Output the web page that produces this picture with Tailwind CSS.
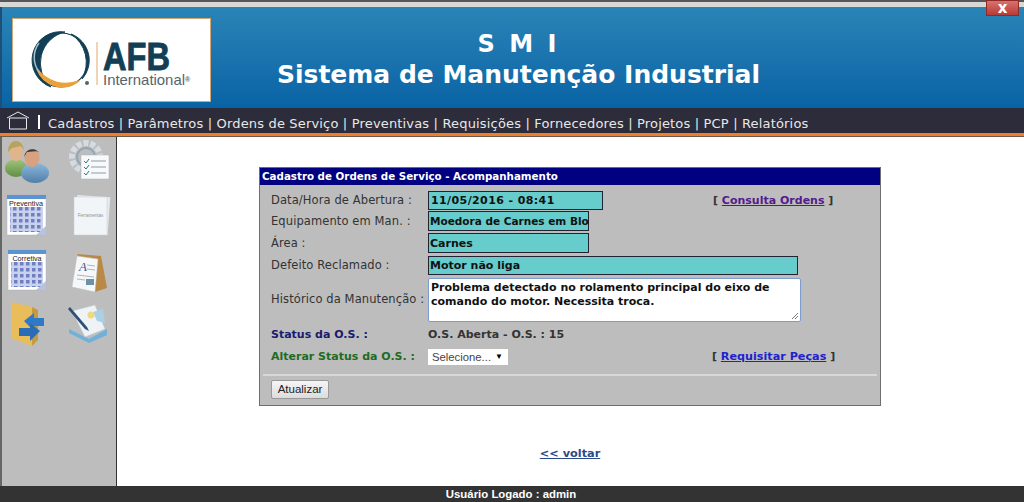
<!DOCTYPE html>
<html lang="pt-BR">
<head>
  <meta charset="UTF-8" />
  <title>SMI - Sistema de Manutenção Industrial</title>
  <script src="https://cdn.jsdelivr.net/npm/@tailwindcss/browser@4"></script>
</head>
<body class="w-[1024px] h-[502px] overflow-hidden bg-white font-['DejaVu_Sans',sans-serif] flex flex-col">

  <!-- window title strip -->
  <div class="h-[7px] shrink-0 bg-[#d8d8d4] border-t-2 border-[#55555a] flex justify-end relative">
    <div class="absolute right-[5px] top-[-2px] w-[33px] h-[16px] bg-gradient-to-b from-[#d9706c] to-[#b83a36] border border-[#8e2a28] text-white text-[15px] leading-[14px] font-bold text-center">x</div>
  </div>

  <!-- header -->
  <header class="h-[101px] shrink-0 bg-gradient-to-b from-[#2a84b6] to-[#0863a5] border-l-2 border-[#1d4f78] flex pl-[10px] pt-[11px]">
    <div class="w-[199px] h-[84px] bg-white border border-[#d0a878] shrink-0">
      <svg width="197" height="82" viewBox="0 0 197 82">
        <circle cx="48" cy="41" r="27" fill="none" stroke="#123f55" stroke-width="1.2"/>
        <path d="M 52 13 A 28.5 28.5 0 0 0 38 68 A 32 32 0 0 1 52 13 Z" fill="#123f55" stroke="#123f55" stroke-width="1"/>
        <path d="M 58 15 A 28 28 0 0 1 69 60 A 34 34 0 0 0 58 15 Z" fill="#123f55" stroke="#123f55" stroke-width="1"/>
        <path d="M 24 50 A 27 27 0 0 0 66 62 A 36 36 0 0 1 24 50 Z" fill="#e9a23b" stroke="#e9a23b" stroke-width="1.5"/>
        <path d="M 26 24 A 24 24 0 0 0 27 54" fill="none" stroke="#a9bec8" stroke-width="1.5"/>
        <circle cx="74" cy="64" r="2" fill="#55656e"/>
        <line x1="84" y1="23" x2="84" y2="66" stroke="#e4a866" stroke-width="1"/>
        <text x="90" y="51" font-family="Liberation Sans" font-weight="700" font-size="38" fill="#123f55" stroke="#123f55" stroke-width="0.9" textLength="67" lengthAdjust="spacingAndGlyphs">AFB</text>
        <text x="90" y="66" font-family="Liberation Sans" font-size="15" fill="#55656e" textLength="82" lengthAdjust="spacingAndGlyphs">International</text>
        <text x="172" y="63" font-family="Liberation Sans" font-weight="700" font-size="7" fill="#55656e">®</text>
      </svg>
    </div>
    <div class="w-[609px] ml-[3px] text-center text-white font-bold text-[25px] leading-[31px] pt-[11px]">
      <div class="tracking-[3px] text-[24px] leading-[30px]">S M I</div>
      <div>Sistema de Manutenção Industrial</div>
    </div>
  </header>

  <!-- menu -->
  <nav class="h-[25px] shrink-0 bg-[#2c2c3a] flex items-center text-[#e8e8e8] text-[13px] tracking-[0.17px] pl-[6px] whitespace-nowrap">
    <svg width="24" height="19" viewBox="0 0 24 19" class="mr-[8px]">
      <path d="M1 7 L12 1 L23 7 M3.5 7 H20.5 V18 H3.5 Z" fill="none" stroke="#e8e8e8" stroke-width="1"/>
    </svg>
    <span class="border-l-2 border-white h-[14px] mr-[8px] mt-[3px]"></span>
    <span class="pt-[6px]">Cadastros | Parâmetros | Ordens de Serviço | Preventivas | Requisições | Fornecedores | Projetos | PCP | Relatórios</span>
  </nav>
  <div class="h-[4px] shrink-0 bg-[#ee7f2d] border-b border-[#6b5a4a]"></div>

  <main class="flex-1 flex min-h-0">
    <!-- side icons -->
    <aside class="w-[117px] shrink-0 bg-[#bdbdbd] border-r border-[#333] border-l-2 border-l-[#666] grid grid-cols-[59px_56px] auto-rows-[55px] content-start pt-[2px]">
      <!-- usuarios -->
      <svg width="46" height="44" viewBox="0 0 46 44" class="ml-[2px]">
        <defs>
          <linearGradient id="verde" x1="0" y1="0" x2="0" y2="1"><stop offset="0" stop-color="#a3c47c"/><stop offset="1" stop-color="#5f8f45"/></linearGradient>
          <linearGradient id="azul" x1="0" y1="0" x2="0" y2="1"><stop offset="0" stop-color="#8db8dc"/><stop offset="1" stop-color="#4f7fa8"/></linearGradient>
        </defs>
        <ellipse cx="12" cy="29" rx="11" ry="9" fill="url(#verde)"/>
        <ellipse cx="12" cy="13" rx="7" ry="9" fill="#e0b48c"/>
        <path d="M4 13 A8 10 0 0 1 20 11 L17 7 L8 9 Z" fill="#b7a35c"/>
        <ellipse cx="31" cy="34" rx="14" ry="10" fill="url(#azul)"/>
        <ellipse cx="28" cy="19" rx="7.5" ry="9" fill="#d9a27e"/>
        <path d="M20 18 A8.5 10 0 0 1 36 16 L34 12 L23 13 Z" fill="#3e3a38"/>
      </svg>
      <!-- parametros -->
      <svg width="42" height="42" viewBox="0 0 42 42" class="ml-[8px] mt-[1px]">
        <circle cx="17" cy="17" r="14" fill="none" stroke="#d5dbe0" stroke-width="6" stroke-dasharray="5 2"/>
        <circle cx="17" cy="17" r="9" fill="none" stroke="#8fa6b6" stroke-width="2"/>
        <rect x="12" y="15" width="28" height="24" fill="#f8f9fa" stroke="#aab6bd" stroke-width="0.5"/>
        <path d="M15 21 l2 2 l3 -4 M15 27 l2 2 l3 -4 M15 33 l2 2 l3 -4" fill="none" stroke="#2b7a78" stroke-width="1"/>
        <path d="M22 21 H37 M22 27 H37 M22 33 H37" stroke="#8f9ba3" stroke-width="1"/>
      </svg>
      <!-- preventiva -->
      <svg width="42" height="44" viewBox="0 0 42 44" class="ml-[4px]">
        <defs>
          <pattern id="dias" width="6" height="6" patternUnits="userSpaceOnUse">
            <rect width="6" height="6" fill="#c9d2ec"/>
            <rect x="1" y="1" width="3.5" height="3.5" fill="#6f7fc2"/>
          </pattern>
        </defs>
        <rect x="1" y="1" width="39" height="40" fill="#fff" stroke="#aab4c8" stroke-width="0.5"/>
        <rect x="1" y="1" width="39" height="4" fill="#5b94d0"/>
        <text x="20" y="11.5" text-anchor="middle" font-family="Liberation Sans" font-size="7.2" fill="#222">Preventiva</text>
        <rect x="4" y="13" width="33" height="25" fill="url(#dias)"/>
        <path d="M30 41 L40 32 V41 Z" fill="#b8c2dc"/>
      </svg>
      <!-- ferramentas -->
      <svg width="42" height="44" viewBox="0 0 42 44" class="ml-[10px]">
        <rect x="5" y="2" width="33" height="38" fill="#e4e9ee" transform="rotate(4 21 21)"/>
        <rect x="3" y="3" width="33" height="38" fill="#f2f5f8" stroke="#c6ced6" stroke-width="0.5"/>
        <text x="19.5" y="23" text-anchor="middle" font-family="Liberation Sans" font-size="4.5" fill="#8a929a">Ferramentas</text>
      </svg>
      <!-- corretiva -->
      <svg width="42" height="44" viewBox="0 0 42 44" class="ml-[5px]">
        <rect x="1" y="1" width="38" height="40" fill="#fff" stroke="#aab4c8" stroke-width="0.5"/>
        <rect x="1" y="1" width="38" height="4" fill="#5b94d0"/>
        <text x="20" y="11.5" text-anchor="middle" font-family="Liberation Sans" font-size="7.2" fill="#222">Corretiva</text>
        <rect x="4" y="13" width="32" height="25" fill="url(#dias)"/>
        <path d="M29 41 L39 32 V41 Z" fill="#b8c2dc"/>
      </svg>
      <!-- relatorios -->
      <svg width="38" height="42" viewBox="0 0 38 42" class="ml-[10px] mt-[3px]">
        <path d="M6 2 L30 4 L36 36 L24 40 Z" fill="#b98a45"/>
        <path d="M6 4 L27 7 L24 40 L1 35 Z" fill="#f6f7f8" stroke="#b9c0c6" stroke-width="0.5"/>
        <text x="8" y="19" font-family="Liberation Serif" font-style="italic" font-size="13" fill="#3a5a9c">A</text>
        <path d="M16 13 L24 14 M16 17 L24 18 M6 23 L23 25 M6 27 L14 28" stroke="#9aa4ad" stroke-width="0.8"/>
        <rect x="15" y="27" width="8" height="6" fill="#6b93a8"/>
      </svg>
      <!-- fornecedores -->
      <svg width="38" height="46" viewBox="0 0 38 46" class="ml-[8px] -mt-[3px]">
        <path d="M1 1 L22 6 V45 L1 37 Z" fill="#e9bd5a"/>
        <path d="M22 6 L28 9 V39 L22 45 Z" fill="#c79a3f"/>
        <path d="M14 20 L24 12 V17 L34 17 V25 L24 25 V30 Z" fill="#2f79c9"/>
        <path d="M30 30 L20 22 V27 L9 27 V35 L20 35 V40 Z" fill="#2a6cb6"/>
      </svg>
      <!-- requisicoes -->
      <svg width="42" height="42" viewBox="0 0 42 42" class="ml-[6px] -mt-[1px]">
        <path d="M2 30 L22 40 L40 32 V26 L22 36 L2 26 Z" fill="#6fb1d8"/>
        <path d="M5 8 L28 2 L38 26 L18 34 Z" fill="#eef3f6" stroke="#bcc8d0" stroke-width="0.5"/>
        <path d="M26 9 L36 6 L38 20 L30 18 Z" fill="#a9d0e6"/>
        <circle cx="24" cy="12" r="3.5" fill="#f1d77e"/>
        <path d="M3 4 L20 24 L22 28 L18 26 L1 6 Z" fill="#2e4f78"/>
      </svg>
    </aside>

    <section class="flex-1 pl-[142px] pt-[30px] min-w-0">
      <!-- form panel -->
      <div class="w-[622px] h-[239px] bg-[#bdbdbd] border border-[#6e6e6e] flex flex-col text-[#333] text-[11.5px] tracking-[0.1px]">
        <div class="h-[17px] shrink-0 bg-[#000080] text-white font-bold text-[10.3px] leading-[17px] pl-[2px] tracking-normal">Cadastro de Ordens de Serviço - Acompanhamento</div>

        <div class="pl-[11px] pt-[5px] flex flex-col whitespace-nowrap">
          <div class="flex items-center h-[20px] mb-[1px]">
            <span class="w-[157px] shrink-0 pt-[2px]">Data/Hora de Abertura :</span>
            <div class="w-[175px] h-[19px] bg-[#66cccc] border border-[#223] pl-[2px] leading-[17px] font-bold text-[11px] tracking-[0.4px] text-[#111]">11/05/2016 - 08:41</div>
            <span class="ml-[110px] font-bold text-[11px] tracking-normal pt-[2px]">[ <a href="#" class="text-[#551a8b] underline">Consulta Ordens</a> ]</span>
          </div>
          <div class="flex items-center h-[20px] mb-[2px]">
            <span class="w-[157px] shrink-0 pt-[2px]">Equipamento em Man. :</span>
            <div class="w-[161px] h-[20px] bg-[#66cccc] border border-[#223] pl-[1px] leading-[19px] font-bold text-[10.5px] tracking-normal text-[#111]">Moedora de Carnes em Blo</div>
          </div>
          <div class="flex items-center h-[20px] mb-[2px]">
            <span class="w-[157px] shrink-0 pt-[2px]">Área :</span>
            <div class="w-[161px] h-[20px] bg-[#66cccc] border border-[#223] pl-[1px] leading-[19px] font-bold text-[11px] tracking-normal text-[#111]">Carnes</div>
          </div>
          <div class="flex items-center h-[20px] mb-[2px]">
            <span class="w-[157px] shrink-0 pt-[2px]">Defeito Reclamado :</span>
            <div class="w-[370px] h-[19px] bg-[#66cccc] border border-[#223] pl-[1px] leading-[17px] font-bold text-[11px] tracking-normal text-[#111]">Motor não liga</div>
          </div>
          <div class="flex items-center h-[45px] mb-[4px]">
            <span class="w-[157px] shrink-0">Histórico da Manutenção :</span>
            <div class="relative w-[373px] h-[44px] bg-white border border-[#7b9bd1] rounded-[2px] pl-[2px] pt-[2px] leading-[14px] font-bold text-[11px] tracking-normal text-[#111]">
              Problema detectado no rolamento principal do eixo de<br>comando do motor. Necessita troca.
              <svg width="8" height="8" viewBox="0 0 8 8" class="absolute right-[1px] bottom-[1px]"><path d="M1 7 L7 1 M4 7 L7 4" stroke="#777" stroke-width="1"/></svg>
            </div>
          </div>
          <div class="flex items-center h-[18px] mb-[4px] font-bold text-[11px] tracking-normal">
            <span class="w-[157px] shrink-0 text-[#1a1a6e]">Status da O.S. :</span>
            <span>O.S. Aberta - O.S. : 15</span>
          </div>
          <div class="flex items-center h-[18px] font-bold text-[11px] tracking-normal">
            <span class="w-[157px] shrink-0 text-[#1f6b1f]">Alterar Status da O.S. :</span>
            <div class="w-[80px] h-[16px] bg-white flex items-center justify-between pl-[4px] pr-[5px] font-normal font-['Liberation_Sans',sans-serif] text-[11.3px] text-[#444]">
              <span>Selecione...</span>
              <span class="text-[8px] text-black">▼</span>
            </div>
            <span class="ml-[204px]">[ <a href="#" class="text-[#2222cc] underline text-[11.2px]">Requisitar Peças</a> ]</span>
          </div>
        </div>

        <div class="mt-[8px] mx-[3px] border-t-2 border-[#d8d8d8]"></div>
        <div class="pl-[11px] pt-[4px]">
          <button class="w-[58px] h-[19px] bg-gradient-to-b from-[#f6f6f6] to-[#dcdcdc] border border-[#999] rounded-[2px] font-['Liberation_Sans',sans-serif] text-[11.5px] leading-[17px] tracking-normal text-[#222]">Atualizar</button>
        </div>
      </div>

      <div class="w-[622px] pt-[34px] text-center">
        <a href="#" class="text-[#2a4a8a] font-bold text-[11.3px] underline">&lt;&lt; voltar</a>
      </div>
    </section>
  </main>

  <footer class="h-[16px] shrink-0 bg-[#333] text-white text-center font-bold font-['Liberation_Sans',sans-serif] text-[11.4px] leading-[16px] pr-[2px]">Usuário Logado : admin</footer>
</body>
</html>
